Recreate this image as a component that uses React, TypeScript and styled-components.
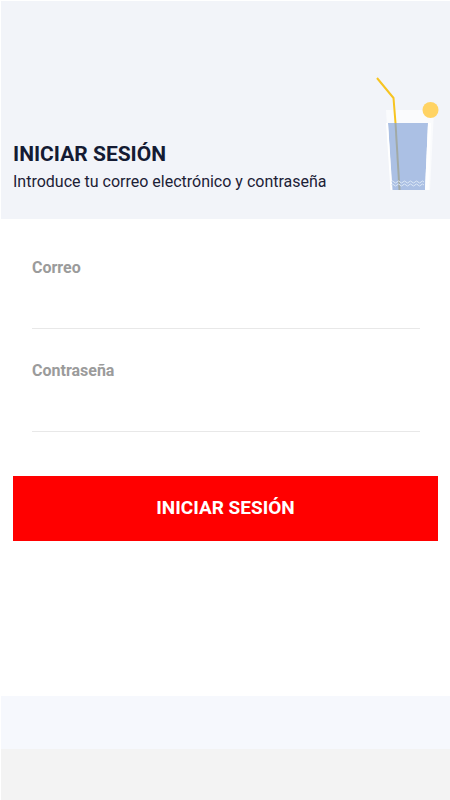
import React from "react";
import styled, { createGlobalStyle } from "styled-components";

const GlobalStyle = createGlobalStyle`
  *, *::before, *::after { box-sizing: border-box; }
  body {
    margin: 0;
    background: #ffffff;
    font-family: Roboto, "Liberation Sans", sans-serif;
  }
`;

const Page = styled.div`
  display: flex;
  flex-direction: column;
  min-height: 100vh;
  padding: 1px 0 0 1px;
`;

const Header = styled.header`
  display: flex;
  justify-content: space-between;
  align-items: flex-end;
  padding: 76px 11px 23px 12px;
  background: #f2f4f9;
`;

const Title = styled.h1`
  margin: 0;
  font-size: 21px;
  line-height: 28px;
  font-weight: 700;
  color: #141b33;
`;

const Subtitle = styled.p`
  margin: 0;
  font-size: 16px;
  line-height: 28px;
  color: #1c2136;
`;

const Illustration = styled.svg`
  flex: none;
  margin-bottom: 5px;
`;

const Main = styled.main`
  flex: 1;
`;

const Form = styled.form`
  padding: 36px 12px;
`;

const Fields = styled.div`
  display: grid;
  gap: 29px;
  padding: 0 18px 0 19px;
`;

const Field = styled.div`
  display: flex;
  flex-direction: column;
`;

const Label = styled.label`
  font-size: 16px;
  line-height: 26px;
  font-weight: 700;
  color: #9b9b9b;
`;

const Input = styled.input`
  width: 100%;
  height: 48px;
  padding: 0;
  border: 0;
  border-bottom: 1px solid #e8e8e8;
  border-radius: 0;
  outline: none;
  background: transparent;
  font: inherit;
  font-size: 16px;
  color: #141b33;
  &:focus {
    border-bottom-color: #9b9b9b;
  }
`;

const SubmitButton = styled.button`
  display: block;
  width: 100%;
  height: 65px;
  margin-top: 44px;
  padding: 0 0 2px;
  border: 0;
  background: #ff0000;
  color: #ffffff;
  font-family: inherit;
  font-size: 19px;
  line-height: 24px;
  font-weight: 700;
  cursor: pointer;
`;

const BottomBand = styled.div<{ $color: string; $height: number }>`
  height: ${(p) => p.$height}px;
  background: ${(p) => p.$color};
`;

const Drink = () => (
  <Illustration width="63" height="114" viewBox="0 0 63 114" aria-hidden="true">
    <path d="M10 33H58L54 113H15Z" fill="#fafbfd" />
    <path d="M12 46H52L49 113H16Z" fill="#abc0e4" />
    <path d="M11 46L15.5 113" stroke="#ffffff" strokeWidth="2" fill="none" />
    <path d="M52 46H55L53 113H49Z" fill="#ffffff" />
    <path d="M1 1L17.5 21L19.5 46" stroke="#f7c421" strokeWidth="2" fill="none" />
    <path d="M19.5 46L23.5 113" stroke="#a1a9a5" strokeWidth="2" fill="none" />
    <g stroke="#dce8f6" strokeWidth="1" fill="none">
      <path d="M15 105q1.5-2 3 0t3 0t3 0t3 0t3 0t3 0t3 0t3 0t3 0t3 0t3 0" />
      <path d="M15 108q1.5-2 3 0t3 0t3 0t3 0t3 0t3 0t3 0t3 0t3 0t3 0t3 0" />
    </g>
    <circle cx="54.5" cy="33" r="8" fill="#ffd364" />
  </Illustration>
);

export default function App() {
  return (
    <>
      <GlobalStyle />
      <Page>
        <Header>
          <div>
            <Title>INICIAR SESIÓN</Title>
            <Subtitle>Introduce tu correo electrónico y contraseña</Subtitle>
          </div>
          <Drink />
        </Header>
        <Main>
          <Form onSubmit={(e: React.FormEvent) => e.preventDefault()}>
            <Fields>
              <Field>
                <Label htmlFor="email">Correo</Label>
                <Input id="email" type="email" autoComplete="email" />
              </Field>
              <Field>
                <Label htmlFor="password">Contraseña</Label>
                <Input id="password" type="password" autoComplete="current-password" />
              </Field>
            </Fields>
            <SubmitButton type="submit">INICIAR SESIÓN</SubmitButton>
          </Form>
        </Main>
        <footer>
          <BottomBand $color="#f6f8fd" $height={53} />
          <BottomBand $color="#f3f3f3" $height={51} />
        </footer>
      </Page>
    </>
  );
}
